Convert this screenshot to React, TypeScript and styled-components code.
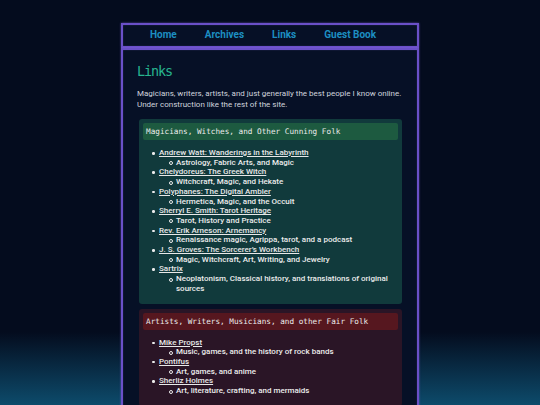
import React from 'react';
import styled, { createGlobalStyle } from 'styled-components';

const GlobalStyle = createGlobalStyle`
  html, body {
    margin: 0;
    padding: 0;
  }
  body {
    height: 405px;
    overflow: hidden;
    background: linear-gradient(to bottom, #040c1e 0%, #040c1e 82%, #0d4b6b 100%);
    font-family: Roboto, "Noto Sans", sans-serif;
  }
`;

type Link = { name: string; about: string };
type Group = { title: string; tone: 'green' | 'red'; links: Link[] };

const groups: Group[] = [
  {
    title: 'Magicians, Witches, and Other Cunning Folk',
    tone: 'green',
    links: [
      { name: 'Andrew Watt: Wanderings in the Labyrinth', about: 'Astrology, Fabric Arts, and Magic' },
      { name: 'Chelydoreus: The Greek Witch', about: 'Witchcraft, Magic, and Hekate' },
      { name: 'Polyphanes: The Digital Ambler', about: 'Hermetica, Magic, and the Occult' },
      { name: 'Sherryl E. Smith: Tarot Heritage', about: 'Tarot, History and Practice' },
      { name: 'Rev. Erik Arneson: Arnemancy', about: 'Renaissance magic, Agrippa, tarot, and a podcast' },
      { name: 'J. S. Groves: The Sorcerer\u2019s Workbench', about: 'Magic, Witchcraft, Art, Writing, and Jewelry' },
      { name: 'Sartrix', about: 'Neoplatonism, Classical history, and translations of original sources' },
    ],
  },
  {
    title: 'Artists, Writers, Musicians, and other Fair Folk',
    tone: 'red',
    links: [
      { name: 'Mike Propst', about: 'Music, games, and the history of rock bands' },
      { name: 'Pontifus', about: 'Art, games, and anime' },
      { name: 'Sherliz Holmes', about: 'Art, literature, crafting, and mermaids' },
    ],
  },
];

const tones = {
  green: { card: '#113a3c', head: '#1d5a40' },
  red: { card: '#2a1526', head: '#56171f' },
};

const App = () => {
  return (
    <>
      <GlobalStyle />
      <Frame>
        <Nav>
          <NavLink href="#">Home</NavLink>
          <NavLink href="#">Archives</NavLink>
          <NavLink href="#">Links</NavLink>
          <NavLink href="#">Guest Book</NavLink>
        </Nav>
        <Main>
          <Title>Links</Title>
          <Intro>
            Magicians, writers, artists, and just generally the best people I know online.
            Under construction like the rest of the site.
          </Intro>
          {groups.map((g) => (
            <Card key={g.title} tone={g.tone}>
              <CardHead tone={g.tone}>{g.title}</CardHead>
              <List>
                {g.links.map((l) => (
                  <Item key={l.name}>
                    <ItemLink href="#">{l.name}</ItemLink>
                    <SubList>
                      <SubItem>{l.about}</SubItem>
                    </SubList>
                  </Item>
                ))}
              </List>
            </Card>
          ))}
        </Main>
      </Frame>
    </>
  );
};

const Frame = styled.div`
  width: 298px;
  margin: 23px auto 0;
`;

const boxBorder = `
  border: 2px solid #6a50c8;
  box-shadow: 0 0 2px rgba(140, 110, 240, 0.6), inset 0 0 1px rgba(160, 130, 255, 0.6);
  background: #061026;
`;

const Nav = styled.nav`
  ${boxBorder}
  height: 21px;
  display: flex;
  align-items: center;
  gap: 28px;
  padding-left: 27px;
`;

const NavLink = styled.a`
  color: #1d8ec2;
  font-weight: 700;
  font-size: 10px;
  text-decoration: none;
  margin-top: -3px;
`;

const Main = styled.main`
  ${boxBorder}
  padding: 13px 12px 0 14px;
  height: 400px;
`;

const Title = styled.h1`
  margin: 0;
  font-family: "DejaVu Sans Mono", "Liberation Mono", monospace;
  font-size: 13.5px;
  letter-spacing: -1.1px;
  font-weight: 400;
  color: #27b48f;
  line-height: 17px;
`;

const Intro = styled.p`
  margin: 8px 0 9px;
  font-size: 8px;
  line-height: 11px;
  color: #d0d4de;
`;

const Card = styled.section<{ tone: 'green' | 'red' }>`
  background: ${(p) => tones[p.tone].card};
  border-radius: 3px;
  padding: 4px 4px 10px;
  margin: 0 3px 5px 2px;
`;

const CardHead = styled.h2<{ tone: 'green' | 'red' }>`
  margin: 0;
  background: ${(p) => tones[p.tone].head};
  border-radius: 2px;
  height: 17px;
  line-height: 17px;
  padding-left: 3px;
  font-family: "DejaVu Sans Mono", "Liberation Mono", monospace;
  font-weight: 400;
  font-size: 7.7px;
  color: #ececec;
`;

const List = styled.ul`
  margin: 8px 0 0;
  padding-left: 16px;
  list-style: none;
  color: #ececec;
  font-size: 8px;
  font-weight: 500;
  line-height: 9.7px;
`;

const Item = styled.li`
  position: relative;
  &::before {
    content: '';
    position: absolute;
    left: -7px;
    top: 4px;
    width: 2.5px;
    height: 2.5px;
    border-radius: 50%;
    background: #ececec;
  }
`;

const ItemLink = styled.a`
  color: #e8e8e8;
  text-decoration: underline;
  text-underline-offset: 1px;
`;

const SubList = styled.ul`
  margin: 0;
  padding-left: 17px;
  list-style: none;
`;

const SubItem = styled.li`
  position: relative;
  &::before {
    content: '';
    position: absolute;
    left: -7px;
    top: 3.5px;
    width: 2px;
    height: 2px;
    border-radius: 50%;
    border: 0.7px solid #ececec;
  }
`;

export default App;
